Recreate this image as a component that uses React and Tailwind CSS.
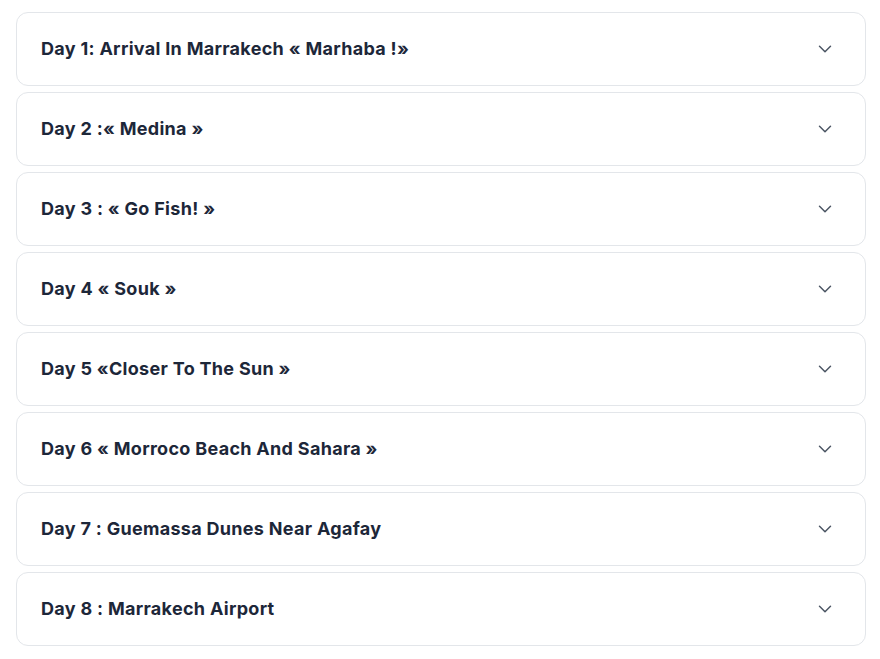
import React from 'react';
import { ChevronDown } from 'lucide-react';

const days = [
  'Day 1: Arrival In Marrakech « Marhaba !»',
  'Day 2 :« Medina »',
  'Day 3 : « Go Fish! »',
  'Day 4 « Souk »',
  'Day 5 «Closer To The Sun »',
  'Day 6 « Morroco Beach And Sahara »',
  'Day 7 : Guemassa Dunes Near Agafay',
  'Day 8 : Marrakech Airport',
];

const App = () => {
  return (
    <div className="min-h-screen bg-white pt-3 pl-4" style={{ fontFamily: 'Inter, "Noto Sans", sans-serif' }}>
      <div className="flex w-[850px] flex-col gap-1.5">
        {days.map((d) => (
          <div
            key={d}
            className="flex h-[74px] items-center justify-between rounded-xl border border-[#e3e6ea] bg-white pl-6 pr-[29px]"
          >
            <span className="-mt-0.5 text-[18px] font-bold tracking-[0.3px] text-[#1d2739]">{d}</span>
            <ChevronDown size={22} strokeWidth={1.6} className="text-[#4b5563]" />
          </div>
        ))}
      </div>
    </div>
  );
};

export default App;
